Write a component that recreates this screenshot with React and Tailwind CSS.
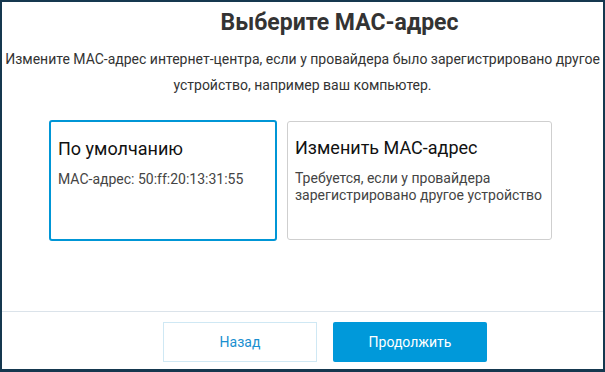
export default function App() {
  return (
    <div
      className="w-[605px] h-[372px] bg-white border-2 border-b-[3px] border-[#15384f] flex flex-col text-[#333]"
      style={{ fontFamily: 'Roboto, "Noto Sans", sans-serif' }}
    >
      {/* Заголовок */}
      <h1 className="pt-[8px] pl-[74px] text-center text-[23px] font-bold leading-[26px] text-[#333]">
        Выберите МАС-адрес
      </h1>
      <p className="mt-[10px] text-center text-[14px] leading-[26px] text-[#333] whitespace-nowrap">
        Измените МАС-адрес интернет-центра, если у провайдера было зарегистрировано другое
        <br />
        устройство, например ваш компьютер.
      </p>

      {/* Варианты */}
      <div className="mt-[22px] flex justify-center items-start gap-[10px] pr-[4px]">
        <div className="w-[228px] h-[121px] border-2 border-[#0096d6] rounded-[3px] px-[7px] pt-[15px]">
          <div className="text-[18px] leading-[24px] text-[#111]">По умолчанию</div>
          <div className="mt-[10px] text-[14px] leading-[17px] text-[#444]">МАС-адрес: 50:ff:20:13:31:55</div>
        </div>
        <div className="mt-[1px] w-[265px] h-[119px] border border-[#cfcfcf] rounded-[3px] px-[7px] pt-[14px] whitespace-nowrap">
          <div className="text-[18px] leading-[24px] text-[#111]">Изменить МАС-адрес</div>
          <div className="mt-[10px] text-[14px] leading-[17px] text-[#444]">
            Требуется, если у провайдера
            <br />
            зарегистрировано другое устройство
          </div>
        </div>
      </div>

      <div className="flex-1" />

      {/* Кнопки */}
      <div className="border-t border-[#dbe3ea] pt-[10px] pb-[7px] flex justify-center gap-4 pl-[45px]">
        <button className="w-[154px] h-[40px] border border-[#cfe8f4] bg-white text-[14px] text-[#1a8fd0]">
          Назад
        </button>
        <button className="w-[154px] h-[40px] rounded-[2px] bg-[#0099da] text-[14px] text-white">
          Продолжить
        </button>
      </div>
    </div>
  );
}
